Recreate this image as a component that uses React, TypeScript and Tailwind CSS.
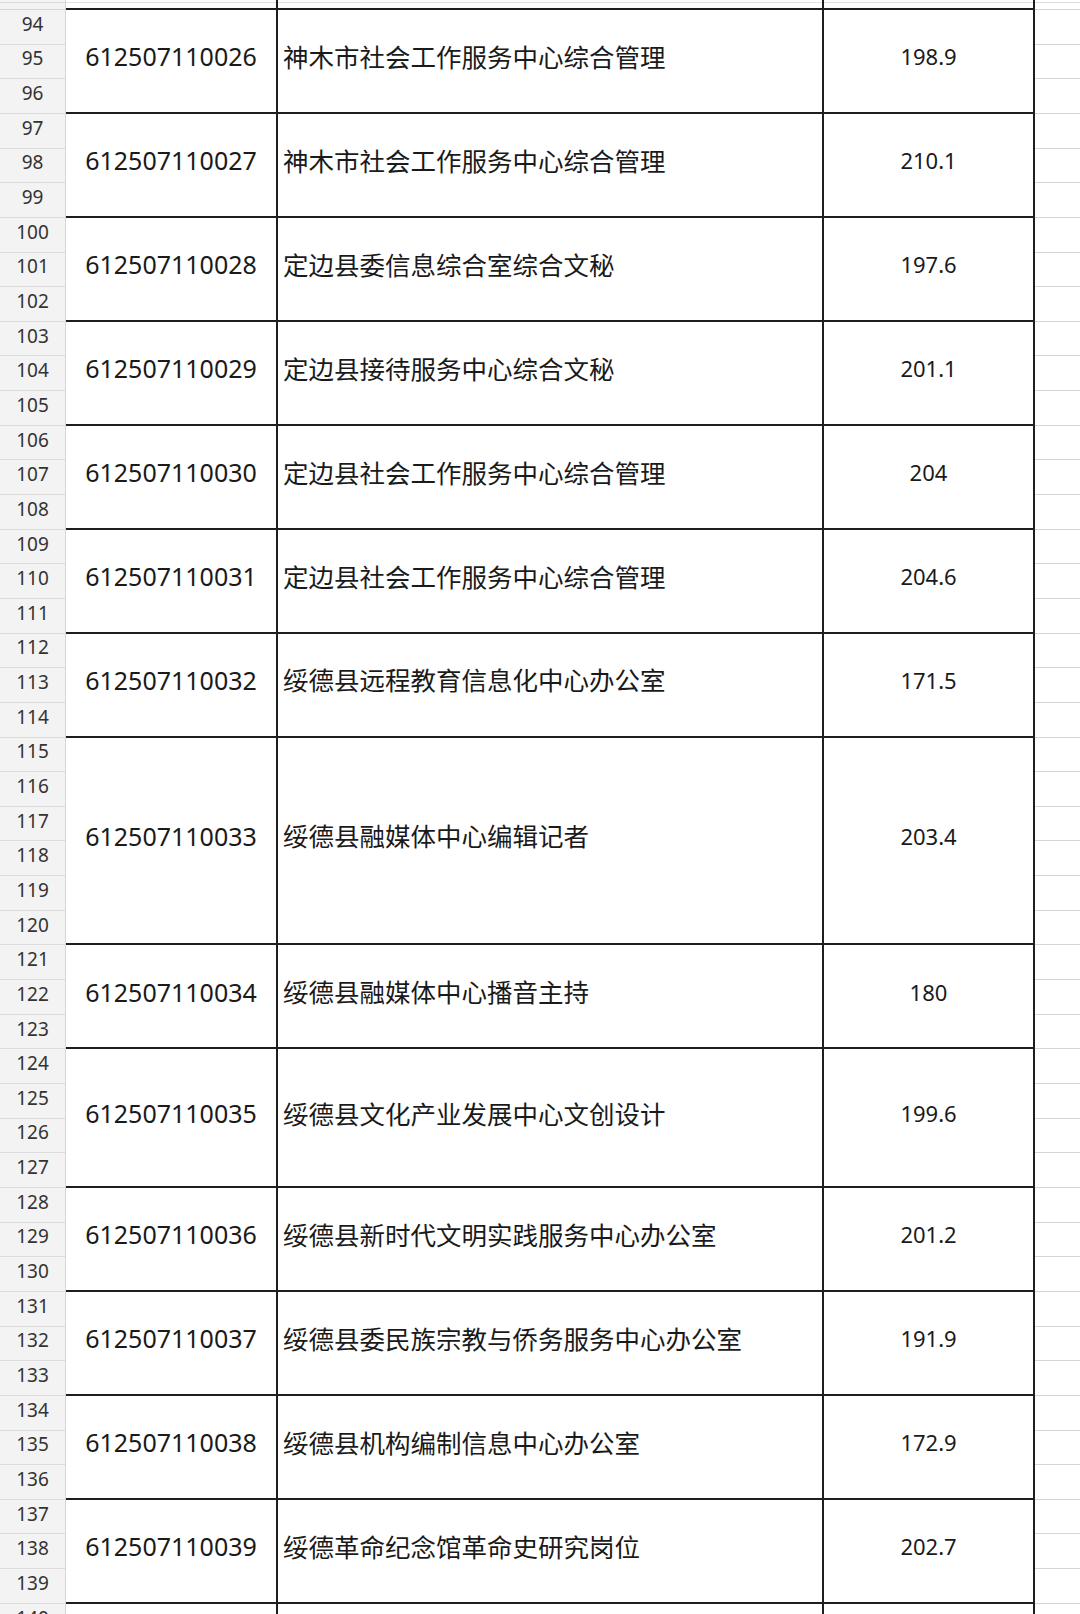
import React from "react";

type Group = { start: number; n: number; code: string; name: string; score: string };

const groups: Group[] = [
  { start: 94, n: 3, code: "612507110026", name: "神木市社会工作服务中心综合管理", score: "198.9" },
  { start: 97, n: 3, code: "612507110027", name: "神木市社会工作服务中心综合管理", score: "210.1" },
  { start: 100, n: 3, code: "612507110028", name: "定边县委信息综合室综合文秘", score: "197.6" },
  { start: 103, n: 3, code: "612507110029", name: "定边县接待服务中心综合文秘", score: "201.1" },
  { start: 106, n: 3, code: "612507110030", name: "定边县社会工作服务中心综合管理", score: "204" },
  { start: 109, n: 3, code: "612507110031", name: "定边县社会工作服务中心综合管理", score: "204.6" },
  { start: 112, n: 3, code: "612507110032", name: "绥德县远程教育信息化中心办公室", score: "171.5" },
  { start: 115, n: 6, code: "612507110033", name: "绥德县融媒体中心编辑记者", score: "203.4" },
  { start: 121, n: 3, code: "612507110034", name: "绥德县融媒体中心播音主持", score: "180" },
  { start: 124, n: 4, code: "612507110035", name: "绥德县文化产业发展中心文创设计", score: "199.6" },
  { start: 128, n: 3, code: "612507110036", name: "绥德县新时代文明实践服务中心办公室", score: "201.2" },
  { start: 131, n: 3, code: "612507110037", name: "绥德县委民族宗教与侨务服务中心办公室", score: "191.9" },
  { start: 134, n: 3, code: "612507110038", name: "绥德县机构编制信息中心办公室", score: "172.9" },
  { start: 137, n: 3, code: "612507110039", name: "绥德革命纪念馆革命史研究岗位", score: "202.7" },
  { start: 140, n: 1, code: "", name: "", score: "" },
];

const ROW = 34.65;
const font = { fontFamily: '"Noto Sans", "Noto Sans CJK SC", sans-serif' };

function GroupRow({ g }: { g: Group }) {
  const rows = Array.from({ length: g.n }, (_, i) => g.start + i);
  const h = g.n * ROW;
  return (
    <div className="flex" style={{ height: h }}>
      <div className="w-[66px] shrink-0 flex flex-col bg-[#f3f3f3] border-r border-[#d6d6d6]">
        {rows.map((r) => (
          <div
            key={r}
            className="h-[34.65px] shrink-0 box-border border-b border-[#dcdcdc] flex items-center justify-center pb-[6px] text-[19px] leading-[24px] text-[#333]"
          >
            {r}
          </div>
        ))}
      </div>
      <div className="w-[212px] shrink-0 box-border border-b-2 border-r-2 border-[#1e1e1e] flex items-center justify-center pb-[8px] text-[25px] text-[#1a1a1a]">
        {g.code}
      </div>
      <div className="w-[546px] shrink-0 box-border border-b-2 border-r-2 border-[#1e1e1e] flex items-center pl-[5px] pb-[8px] text-[25.5px] text-[#1a1a1a] whitespace-nowrap">
        {g.name}
      </div>
      <div className="w-[211px] shrink-0 box-border border-b-2 border-r-2 border-[#1e1e1e] flex items-center justify-center pb-[8px] text-[22px] text-[#1a1a1a]">
        {g.score}
      </div>
      <div className="flex-1 flex flex-col">
        {rows.map((r) => (
          <div key={r} className="h-[34.65px] shrink-0 box-border border-b border-[#d6d6d6]" />
        ))}
      </div>
    </div>
  );
}

export default function App() {
  return (
    <div className="w-[1080px] h-[1614px] overflow-hidden bg-white" style={font}>
      {/* partial row 93 above */}
      <div className="flex h-[10px]">
        <div className="w-[66px] shrink-0 bg-[#f3f3f3] border-r border-[#d6d6d6] box-border border-b">
          <div className="mt-[2px] border-t border-[#dcdcdc]" />
        </div>
        <div className="w-[212px] shrink-0 box-border border-b-2 border-r-2 border-[#1e1e1e]">
          <div className="mt-[2px] border-t border-[#e2e2e2]" />
        </div>
        <div className="w-[546px] shrink-0 box-border border-b-2 border-r-2 border-[#1e1e1e]">
          <div className="mt-[2px] border-t border-[#e2e2e2]" />
        </div>
        <div className="w-[211px] shrink-0 box-border border-b-2 border-r-2 border-[#1e1e1e]">
          <div className="mt-[2px] border-t border-[#e2e2e2]" />
        </div>
        <div className="flex-1 box-border border-b border-[#d6d6d6]">
          <div className="mt-[2px] border-t border-[#dcdcdc]" />
        </div>
      </div>
      {groups.map((g) => (
        <GroupRow key={g.start} g={g} />
      ))}
    </div>
  );
}
